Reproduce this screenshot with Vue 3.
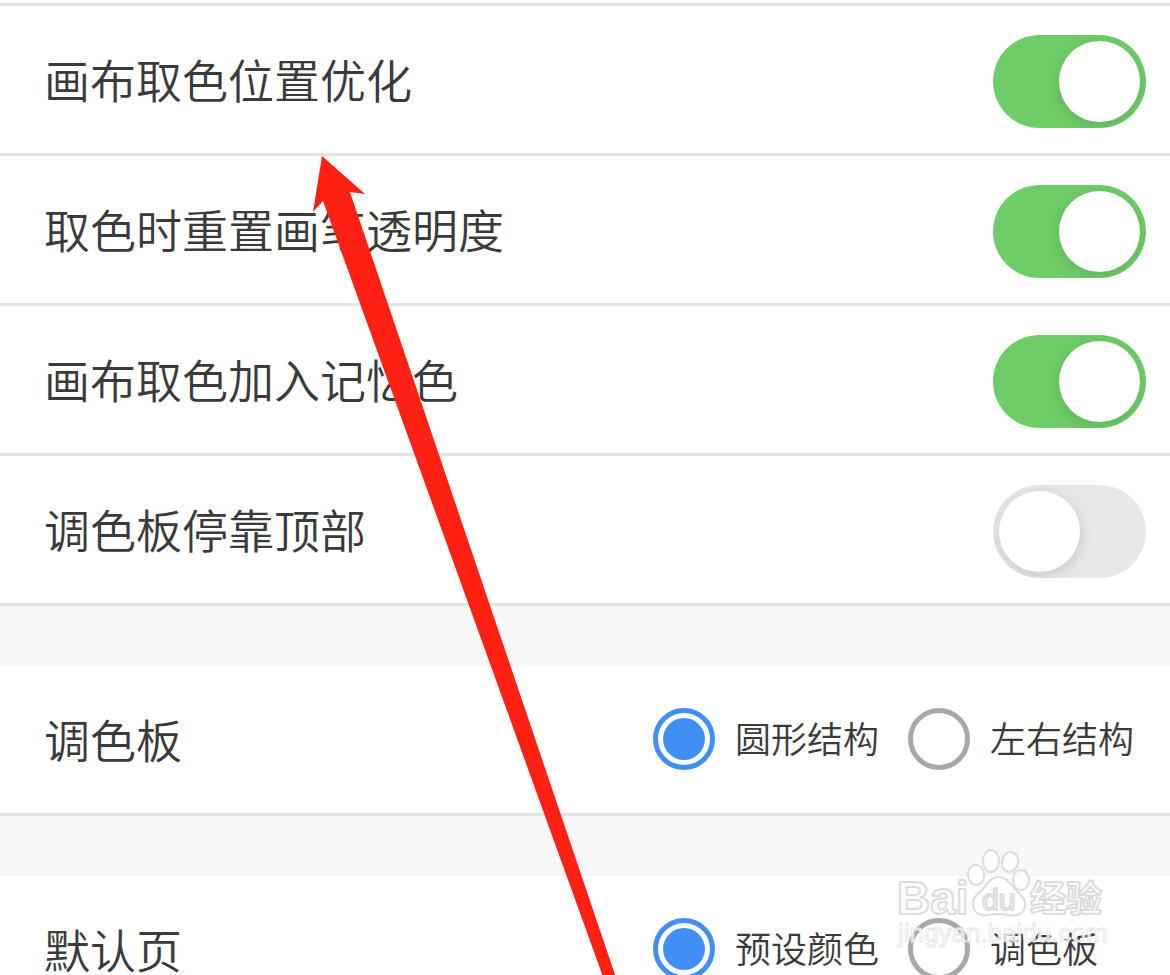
<script setup>
import { reactive } from 'vue'

const toggles = reactive([
  { id: 'position', label: '画布取色位置优化', on: true },
  { id: 'opacity', label: '取色时重置画笔透明度', on: true },
  { id: 'memory', label: '画布取色加入记忆色', on: true },
  { id: 'dock', label: '调色板停靠顶部', on: false },
])

const choices = reactive([
  { id: 'palette', label: '调色板', options: ['圆形结构', '左右结构'], value: '圆形结构' },
  { id: 'page', label: '默认页', options: ['预设颜色', '调色板'], value: '预设颜色' },
])
</script>

<template>
  <main class="page">
    <section class="group first">
      <div v-for="t in toggles" :key="t.id" class="row">
        <label class="title" :for="t.id">{{ t.label }}</label>
        <input :id="t.id" v-model="t.on" class="switch" type="checkbox" role="switch" />
      </div>
    </section>

    <section v-for="c in choices" :key="c.id" class="group">
      <div class="row choice" role="radiogroup" :aria-labelledby="c.id">
        <span :id="c.id" class="title">{{ c.label }}</span>
        <div class="options">
          <label v-for="o in c.options" :key="o" class="option">
            <input v-model="c.value" class="radio" type="radio" :name="c.id" :value="o" />
            <span class="caption">{{ o }}</span>
          </label>
        </div>
      </div>
    </section>

    <svg class="arrow" width="640" height="1010" viewBox="0 0 640 1010" aria-hidden="true">
      <path d="M322 156L365 194L350 192L627 1010H615L323 201L313 212Z" fill="#ff2113" />
    </svg>

    <svg class="watermark" width="220" height="104" viewBox="0 0 220 104" role="img" aria-label="Baidu 经验">
      <g class="mark">
        <text class="latin" x="5" y="69">Bai</text>
        <ellipse cx="84" cy="30" rx="8" ry="10" transform="rotate(-8 84 30)" />
        <ellipse cx="99" cy="16" rx="8" ry="11" />
        <ellipse cx="118" cy="17" rx="8" ry="10" transform="rotate(14 118 17)" />
        <ellipse cx="129" cy="35" rx="8" ry="10" />
        <path d="M106 32C98 32 95 40 90 45C84 50 80 54 81 60C82 68 88 71 95 70C102 69 108 68 116 70C125 72 132 69 133 61C134 53 127 49 122 43C117 37 114 32 106 32Z" />
        <text class="du" x="90" y="65">du</text>
        <text class="cjk" x="138" y="67">经验</text>
        <text class="url" x="6" y="97">jingyan.baidu.com</text>
      </g>
    </svg>
  </main>
</template>

<style>
body {
  margin: 0;
  background: #fff;
}
</style>

<style scoped>
.page {
  position: relative;
  height: 100vh;
  overflow: hidden;
  background: #f7f7f7;
  color: #3a3a3a;
  font-family: "Noto Sans CJK SC", sans-serif;
  font-weight: 350;
}

.group {
  margin-bottom: 60px;
  background: #fff;
}

.first {
  padding-top: 3px;
}

.row {
  display: flex;
  align-items: flex-start;
  justify-content: space-between;
  box-sizing: border-box;
  min-height: 150px;
  padding: 29px 24px 22px 44px;
  border-bottom: 3px solid #e4e4e4;
}

.first .row:first-child {
  min-height: 153px;
  border-top: 3px solid #e4e4e4;
}

.choice {
  padding-right: 34px;
}

.title {
  font-size: 46px;
  line-height: 86px;
  white-space: nowrap;
}

.switch {
  appearance: none;
  display: flex;
  flex: none;
  box-sizing: border-box;
  width: 153px;
  height: 93px;
  margin: 0;
  padding: 6px;
  overflow: hidden;
  border-radius: 47px;
  background: #e8e8e8;
  cursor: pointer;
}

.switch::before {
  content: "";
  width: 81px;
  height: 81px;
  border-radius: 50%;
  background: #fff;
  box-shadow: 0 4px 16px rgba(0, 0, 0, 0.14);
}

.switch:checked {
  justify-content: flex-end;
  background: #6fcd69;
}

.options {
  display: grid;
  grid-template-columns: repeat(2, 228px);
  gap: 27px;
  padding-top: 13px;
}

.option {
  display: flex;
  align-items: center;
  gap: 20px;
  font-size: 36px;
  line-height: 58px;
  white-space: nowrap;
  cursor: pointer;
}

.caption {
  padding-bottom: 4px;
}

.radio {
  appearance: none;
  flex: none;
  box-sizing: border-box;
  width: 62px;
  height: 62px;
  margin: 0;
  border: 5px solid #a8a8a8;
  border-radius: 50%;
  background: #fff;
}

.radio:checked {
  padding: 5px;
  border-color: #418ff5;
  background: #418ff5 content-box;
}

.arrow {
  position: absolute;
  top: 0;
  left: 0;
  pointer-events: none;
}

.watermark {
  position: absolute;
  right: 58px;
  bottom: 26px;
  overflow: visible;
  pointer-events: none;
}

.mark {
  fill: rgba(255, 255, 255, 0.75);
  stroke: #dcdcdc;
  stroke-width: 2px;
  stroke-linejoin: round;
}

.latin,
.du,
.url {
  font-family: "Liberation Sans", Arial, sans-serif;
}

.latin {
  font-size: 46px;
  font-weight: 700;
}

.du {
  font-size: 30px;
  font-weight: 400;
}

.cjk {
  font-size: 36px;
  font-weight: 700;
}

.url {
  font-size: 26px;
  font-weight: 400;
  stroke: #e6e6e6;
  stroke-width: 1px;
}
</style>
